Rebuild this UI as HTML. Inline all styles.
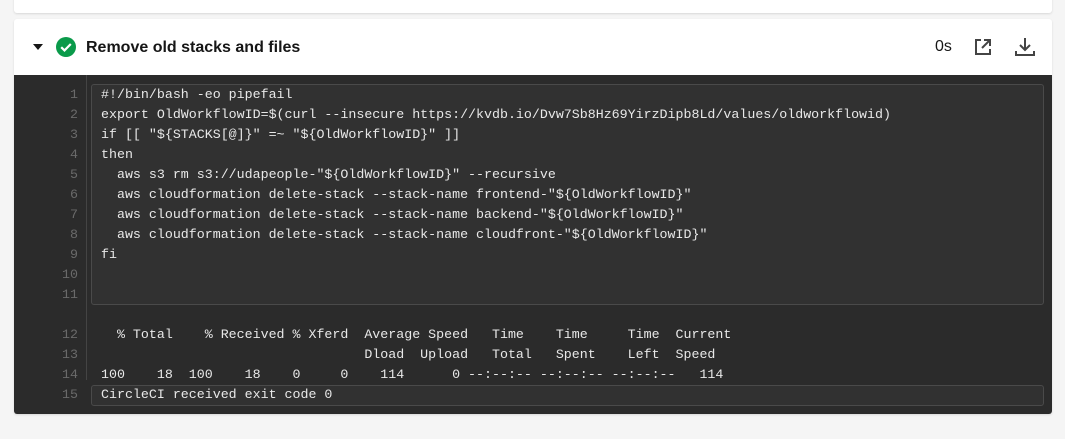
<!DOCTYPE html>
<html><head><style>
body{margin:0;background:#f5f5f5;width:1065px;height:439px;overflow:hidden;font-family:"Liberation Sans",sans-serif}
.top{position:absolute;left:14px;top:-5px;width:1038px;height:18px;background:#fff;border-radius:3px;box-shadow:0 1px 2px rgba(0,0,0,.12)}
.card{position:absolute;left:14px;top:19px;width:1038px;height:395px;background:#fff;border-radius:3px;box-shadow:0 1px 2px rgba(0,0,0,.12);overflow:hidden}
.hdr{height:56px;position:relative}
.title{position:absolute;left:72px;top:20px;font-size:16px;font-weight:bold;color:#161616}
.dark{position:absolute;left:0;top:56px;width:1038px;height:339px;background:#2b2b2b}
.ln{position:absolute;left:0;width:64px;text-align:right;color:#6a6a6a;font:13.3px "Liberation Mono",monospace}
.code{position:absolute;left:87px;color:#e8e8e8;font:13.3px "Liberation Mono",monospace;white-space:pre}
.vline{position:absolute;left:72px;top:0;width:1px;height:305px;background:#444}
.box{position:absolute;border:1px solid #4a4a4a;border-radius:3px;background:#313131}
</style></head><body>
<div class="top"></div>
<div class="card">
<div class="hdr">
<svg style="position:absolute;left:19px;top:25px" width="10" height="7"><path d="M0 0L10 0L5 6Z" fill="#161616"/></svg>
<svg style="position:absolute;left:41px;top:17px" width="22" height="22"><circle cx="11" cy="11" r="10" fill="#0a9a4a"/><path d="M6.2 11.2L9.5 14.4L15.8 8" stroke="#fff" stroke-width="2.2" fill="none"/></svg>
<div class="title">Remove old stacks and files</div>
<div style="position:absolute;left:921px;top:19px;font-size:16px;color:#161616">0s</div>
<svg style="position:absolute;left:959px;top:18px" width="20" height="20" fill="none" stroke="#444" stroke-width="2"><path d="M8 3H3V17H17V12"/><path d="M11 3H17V9M17 3L9 11"/></svg>
<svg style="position:absolute;left:1000px;top:17px" width="22" height="22" fill="none" stroke="#444" stroke-width="2"><path d="M11 2V14M6 9L11 14L16 9"/><path d="M2 15V19H20V15"/></svg>
</div>
<div class="dark">
<div class="vline"></div>
<div class="box" style="left:77px;top:9px;width:951px;height:219px"></div>
<div class="box" style="left:77px;top:310px;width:951px;height:19px"></div>
<div class="ln" style="top:10px;line-height:20px">1<br>2<br>3<br>4<br>5<br>6<br>7<br>8<br>9<br>10<br>11</div>
<div class="code" style="top:10px;line-height:20px">#!/bin/bash -eo pipefail
export OldWorkflowID=$(curl --insecure https://kvdb.io/Dvw7Sb8Hz69YirzDipb8Ld/values/oldworkflowid)
if [[ "${STACKS[@]}" =~ "${OldWorkflowID}" ]]
then
  aws s3 rm s3://udapeople-"${OldWorkflowID}" --recursive
  aws cloudformation delete-stack --stack-name frontend-"${OldWorkflowID}"
  aws cloudformation delete-stack --stack-name backend-"${OldWorkflowID}"
  aws cloudformation delete-stack --stack-name cloudfront-"${OldWorkflowID}"
fi</div>
<div class="ln" style="top:250px;line-height:20px">12<br>13<br>14<br>15</div>
<div class="code" style="top:250px;line-height:20px">  % Total    % Received % Xferd  Average Speed   Time    Time     Time  Current
                                 Dload  Upload   Total   Spent    Left  Speed
100    18  100    18    0     0    114      0 --:--:-- --:--:-- --:--:--   114
CircleCI received exit code 0</div>
</div>
</div>
</body></html>
